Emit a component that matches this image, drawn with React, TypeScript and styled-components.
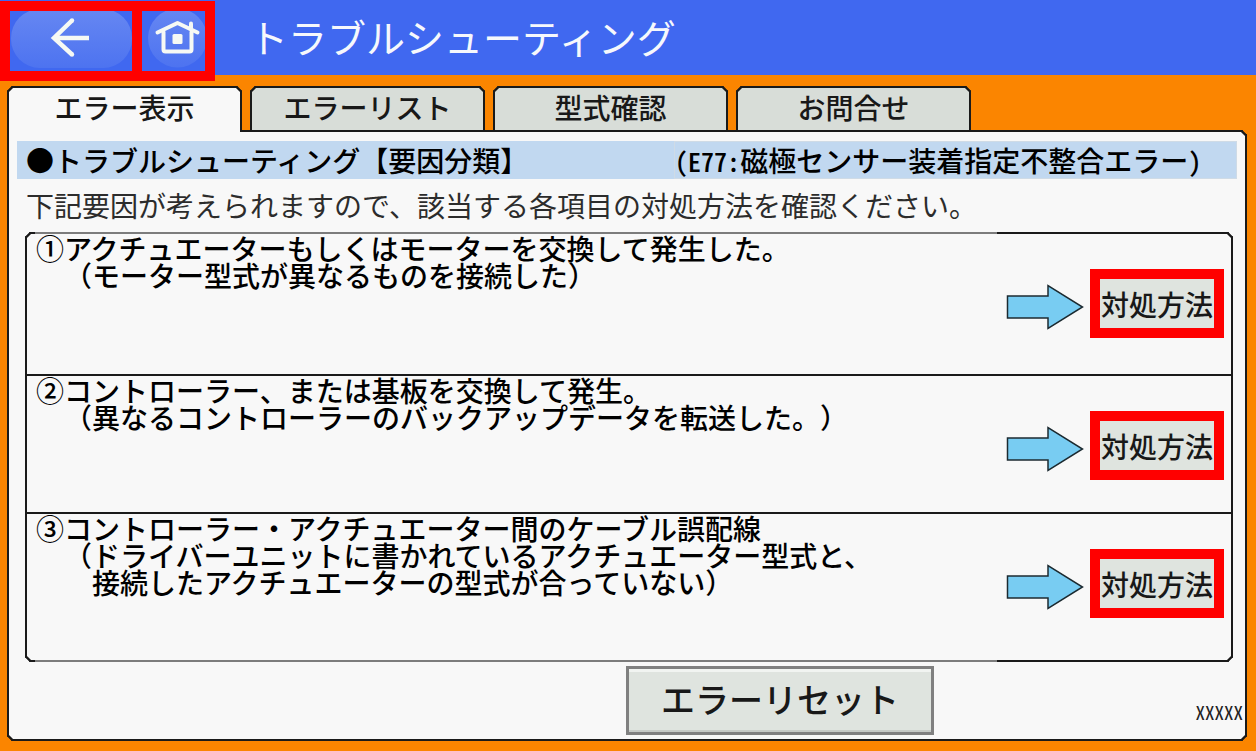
import React from "react";
import styled, { createGlobalStyle } from "styled-components";

const ink = "#1a1a1a";
const red = "#ff0000";

const GlobalStyle = createGlobalStyle`
  *, *::before, *::after { box-sizing: border-box; }
  body {
    margin: 0;
    background: #fb8500;
    color: #000;
    font-family: "Noto Sans CJK JP", "Noto Sans", sans-serif;
    text-spacing-trim: space-all;
  }
  button { font-family: inherit; color: #181818; cursor: pointer; }
`;

const Screen = styled.div`
  display: flex;
  flex-direction: column;
  min-height: 100vh;
`;

const Header = styled.header`
  display: flex;
  align-items: flex-start;
  height: 75px;
  padding-top: 1px;
  background: #4068f0;
`;

const NavButton = styled.button<{ $joined?: boolean }>`
  display: flex;
  flex: none;
  padding: 0;
  border: 10px solid ${red};
  margin-left: ${(p) => (p.$joined ? "-10px" : "0")};
  background: #4068f0;
`;

const Title = styled.h1`
  margin: 0 0 0 34px;
  color: #f6f8fc;
  font-size: 39px;
  font-weight: 400;
  line-height: 70px;
  white-space: nowrap;
`;

const Main = styled.main`
  display: flex;
  flex: 1;
  flex-direction: column;
  padding: 11px 9px 10px 7px;
`;

const Tabs = styled.nav`
  display: flex;
  gap: 8px;
`;

const Tab = styled.button<{ $active?: boolean }>`
  flex: 0 1 235px;
  height: 46px;
  padding: 0 0 6px;
  border: 2px solid ${ink};
  border-bottom: 0;
  border-radius: 5px 5px 0 0;
  corner-shape: bevel;
  background: ${(p) => (p.$active ? "#f8f8f8" : "#d8ddd8")};
  position: relative;
  z-index: ${(p) => (p.$active ? 1 : 0)};
  font-size: 28px;
  font-weight: 500;
  line-height: 38px;
  white-space: nowrap;
`;

const Panel = styled.section`
  display: flex;
  flex: 1;
  flex-direction: column;
  margin-top: -2px;
  padding: 9px 8px 4px;
  border: 2px solid ${ink};
  border-radius: 0 5px 5px 5px;
  corner-shape: bevel;
  background: #f8f8f8;
  position: relative;
`;

const SectionBar = styled.div`
  display: flex;
  background: #c1d8f0;
`;

const SectionTitle = styled.h2`
  flex: 654 1 0;
  margin: 0;
  padding-left: 9px;
  font-size: 28px;
  font-weight: 500;
  line-height: 38px;
  white-space: nowrap;
`;

const ErrorName = styled.p`
  flex: 566 1 0;
  margin: 0;
  border: 1px solid #cfdbe6;
  font-size: 28px;
  font-weight: 500;
  line-height: 36px;
  white-space: nowrap;
`;

const HalfWidth = styled.span`
  font-feature-settings: "hwid";
  font-size: 26px;
  line-height: 28px;
`;

const Intro = styled.p`
  margin: 12px 8px 13px 9px;
  color: #2c2c2c;
  font-size: 28px;
  line-height: 28px;
`;

const CauseList = styled.ol`
  display: grid;
  grid-template-rows: minmax(142px, auto) minmax(138px, auto) minmax(146px, auto);
  margin: 0 4px 0 8px;
  padding: 0;
  border: 2px solid ${ink};
  border-radius: 5px;
  corner-shape: bevel;
  list-style: none;
  position: relative;

  &::before,
  &::after {
    content: "";
    position: absolute;
    left: 8px;
    right: 234px;
    height: 2px;
    background: #7c7c7c;
  }
  &::before { top: -2px; }
  &::after { bottom: -2px; }
`;

const Cause = styled.li`
  display: flex;
  justify-content: space-between;

  &:not(:last-child) { border-bottom: 2px solid ${ink}; }
`;

const CauseText = styled.p`
  margin: 0;
  padding: 1px 0 0 9px;
  font-size: 28px;
  font-weight: 500;
  line-height: 27px;
  white-space: pre-wrap;
`;

const Action = styled.div`
  display: flex;
  flex: none;
  align-items: center;
  align-self: flex-start;
  gap: 6px;
  padding: 35px 7px 0 0;
`;

const RemedyButton = styled.button`
  width: 134px;
  height: 69px;
  padding: 0;
  border: 10px solid ${red};
  background: #dfe4df;
  font-size: 28px;
  font-weight: 500;
  line-height: 46px;
  white-space: nowrap;
`;

const Footer = styled.footer`
  display: grid;
  grid-template-columns: 1fr 1fr;
  margin: auto -7px 0 -9px;
`;

const FooterEnd = styled.div`
  grid-column: 2;
  display: flex;
  align-items: center;
  justify-content: space-between;
  padding-right: 1px;
`;

const ResetButton = styled.button`
  width: 308px;
  height: 69px;
  padding: 0 0 3px;
  border: 3px solid #808080;
  background: #dfe4df;
  box-shadow: inset 0 3px 0 #f1f4f1, inset 0 -2px 0 #c6cac6;
  font-size: 34px;
  font-weight: 500;
  line-height: 58px;
`;

const ScreenCode = styled(HalfWidth)`
  padding-top: 22px;
  color: #222;
  font-size: 19px;
`;

const BackIcon = () => (
  <svg width="122" height="60" viewBox="0 0 122 60" aria-hidden="true">
    <defs>
      <linearGradient id="backFill" x1="0" y1="0" x2="0" y2="1">
        <stop offset="0" stopColor="#6687f2" />
        <stop offset="1" stopColor="#4d73f0" />
      </linearGradient>
    </defs>
    <rect x="1" y="-2" width="121" height="59" rx="29" fill="url(#backFill)" />
    <path d="M79 27H44M62 9.500L44 27l18 16.500" fill="none" stroke="#f6f9f4" strokeWidth="4.500" />
    <circle cx="62" cy="9.500" r="2.200" fill="#f6f9f4" />
    <circle cx="62" cy="43.500" r="2.200" fill="#f6f9f4" />
  </svg>
);

const HomeIcon = () => (
  <svg width="63" height="60" viewBox="0 0 63 60" aria-hidden="true">
    <defs>
      <linearGradient id="homeFill" x1="0" y1="0" x2="0" y2="1">
        <stop offset="0" stopColor="#6687f2" />
        <stop offset="1" stopColor="#4d73f0" />
      </linearGradient>
    </defs>
    <circle cx="35.500" cy="27" r="29.500" fill="url(#homeFill)" />
    <g fill="none" stroke="#f6f9f4" strokeWidth="4" strokeLinecap="round" strokeLinejoin="round">
      <path d="M15.500 21.500L35.500 12L55.500 21.500" />
      <path d="M21.500 21V38.500Q21.500 40.500 23.500 40.500H47.500Q49.500 40.500 49.500 38.500V21" />
      <path d="M49 12.500V17" />
    </g>
    <rect x="30.500" y="23" width="10" height="10" rx="1.500" fill="#f6f9f4" />
  </svg>
);

const ArrowIcon = () => (
  <svg width="78" height="52" viewBox="0 -6 78 52" aria-hidden="true">
    <path d="M1.500 12H42V1.500L76.500 23L42 44.500V34H1.500Z" fill="#78ccf2" stroke="#1c2a30" strokeWidth="1.500" />
  </svg>
);

const tabs = ["エラー表示", "エラーリスト", "型式確認", "お問合せ"];

const causes = [
  "①アクチュエーターもしくはモーターを交換して発生した。\n　（モーター型式が異なるものを接続した）",
  "②コントローラー、または基板を交換して発生。\n　（異なるコントローラーのバックアップデータを転送した。）",
  "③コントローラー・アクチュエーター間のケーブル誤配線\n　（ドライバーユニットに書かれているアクチュエーター型式と、\n　　接続したアクチュエーターの型式が合っていない）",
];

export default function App() {
  return (
    <Screen>
      <GlobalStyle />
      <Header>
        <NavButton type="button" aria-label="戻る">
          <BackIcon />
        </NavButton>
        <NavButton type="button" aria-label="ホーム" $joined>
          <HomeIcon />
        </NavButton>
        <Title>トラブルシューティング</Title>
      </Header>
      <Main>
        <Tabs>
          {tabs.map((label, i) => (
            <Tab key={label} type="button" $active={i === 0} aria-current={i === 0 ? "page" : undefined}>
              {label}
            </Tab>
          ))}
        </Tabs>
        <Panel>
          <SectionBar>
            <SectionTitle>●トラブルシューティング【要因分類】</SectionTitle>
            <ErrorName>
              <HalfWidth>(E77:</HalfWidth>磁極センサー装着指定不整合エラー<HalfWidth>)</HalfWidth>
            </ErrorName>
          </SectionBar>
          <Intro>下記要因が考えられますので、該当する各項目の対処方法を確認ください。</Intro>
          <CauseList>
            {causes.map((text) => (
              <Cause key={text}>
                <CauseText>{text}</CauseText>
                <Action>
                  <ArrowIcon />
                  <RemedyButton type="button">対処方法</RemedyButton>
                </Action>
              </Cause>
            ))}
          </CauseList>
          <Footer>
            <FooterEnd>
              <ResetButton type="button">エラーリセット</ResetButton>
              <ScreenCode>XXXXX</ScreenCode>
            </FooterEnd>
          </Footer>
        </Panel>
      </Main>
    </Screen>
  );
}
